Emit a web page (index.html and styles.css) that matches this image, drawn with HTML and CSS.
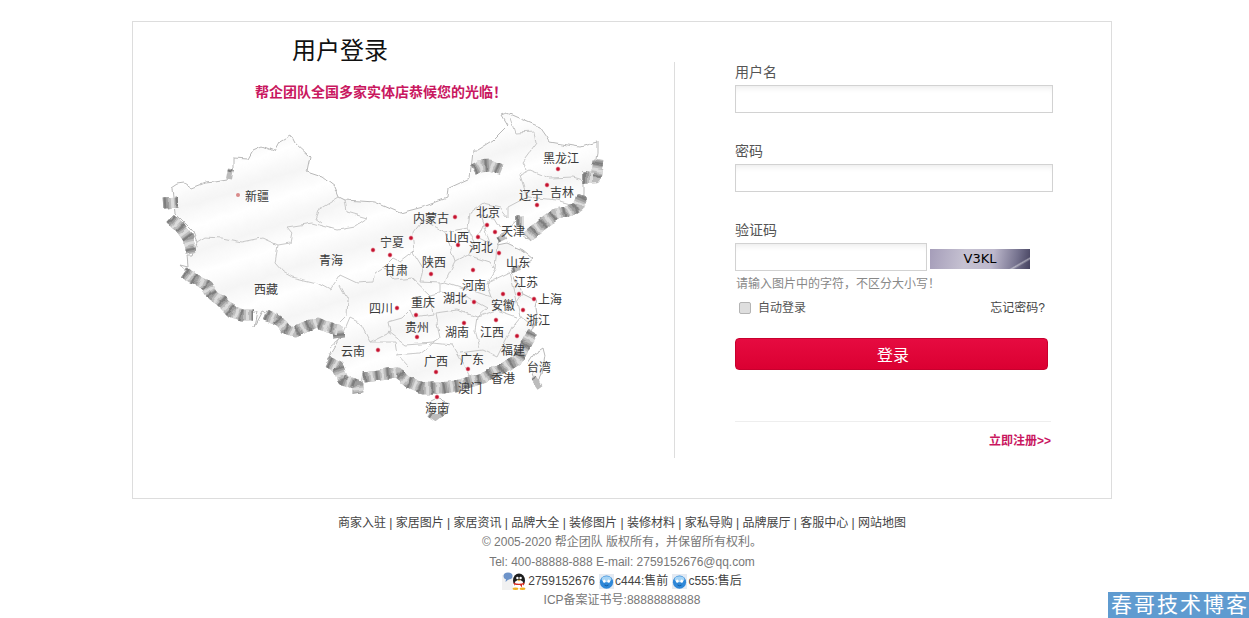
FILE: index.html
```html
<!DOCTYPE html>
<html lang="zh-CN">
<head>
    <meta charset="UTF-8">
    <title>用户登录</title>
    <link rel="stylesheet" href="styles.css">
</head>
<body>

    <div class="wrapper">
        <div class="card">
            <div class="left-col">
                <h1 class="title">用户登录</h1>
                <p class="tagline">帮企团队全国多家实体店恭候您的光临！</p>

                <svg class="map" width="460" height="325" viewBox="150 105 460 325">
                    <defs>
                        <linearGradient id="landGrad" x1="0" y1="0" x2="0" y2="1">
                            <stop offset="0" stop-color="#fff"/>
                            <stop offset="0.5" stop-color="#f5f5f5"/>
                            <stop offset="1" stop-color="#fff"/>
                        </linearGradient>
                        <pattern id="land" width="40" height="46" patternUnits="userSpaceOnUse" patternTransform="rotate(-18)">
                            <rect width="40" height="46" fill="url(#landGrad)"/>
                        </pattern>
                        <filter id="rough" x="140" y="100" width="480" height="335" filterUnits="userSpaceOnUse">
                            <feTurbulence type="fractalNoise" baseFrequency="0.09" numOctaves="2" seed="4"/>
                            <feDisplacementMap in="SourceGraphic" scale="5" xChannelSelector="R" yChannelSelector="G"/>
                        </filter>
                        <g id="ribbons">
                            <path d="M163 203 178 202"/>
                            <path d="M170 218 180 227 188 238 191 253"/>
                            <path d="M183 272 192 278 207 285 213 295 222 302 232 312 242 315 253 315"/>
                            <path d="M265 315 277 320 285 328 295 332 305 327 317 323 327 327 338 330 339 338"/>
                            <path d="M327 362 338 367 343 380 357 385 358 393"/>
                            <path d="M363 377 380 375 398 373 408 382 423 388 437 388 443 388 460 385 483 378 503 368 517 360 527 343 533 332"/>
                            <path d="M473 170 480 166 490 165 502 170"/>
                            <path d="M583 178 595 178 598 160"/>
                            <path d="M582 196 578 206 566 212 556 214 543 224 527 237"/>
                            <path d="M515 221 524 221"/>
                        </g>
                        <g id="ribbonsThin">
                            <path d="M231 168 229 179"/>
                            <path d="M497 240 505 236"/>
                            <path d="M512 270 520 268"/>
                            <path d="M430 415 436 419 445 412"/>
                            <path d="M533 377 540 387"/>
                        </g>
                    </defs>

                    <g filter="url(#rough)">
                        <!-- 陆地 -->
                        <path class="land" fill="url(#land)" d="M172 188 178 184 185 183 192 188 205 183 215 182 227 180 233 168 233 158 248 159 253 150 262 146 274 151 279 142 291 135 295 143 310 157 307 172 322 177 335 187 339 197 345 200 375 202 400 213 423 207 447 198 448 188 470 178 473 150 477 150 493 140 508 125 502 115 507 113 523 120 540 127 547 137 550 142 580 147 598 142 598 153 595 172 593 183 583 183 583 193 582 207 568 213 557 220 543 227 527 240 520 228 515 222 508 228 500 240 497 245 507 243 522 250 533 259 518 270 512 272 516 282 523 293 537 300 535 308 537 320 533 327 523 348 505 367 470 378 440 387 437 391 408 378 398 368 363 372 360 392 340 375 327 363 330 355 340 338 338 328 317 320 293 332 280 320 263 312 255 327 258 312 232 313 212 297 193 280 180 265 188 267 187 255 193 255 197 242 192 230 175 213Z"/>
                        <path class="land" fill="url(#land)" d="M427 403 437 398 448 403 446 412 436 420 430 414Z"/>
                        <path class="land" fill="url(#land)" d="M528 363 534 354 543 348 545 356 542 373 538 388 533 376Z"/>

                        <!-- 省界 -->
                        <g class="border">
                            <path d="M197 242 205 237 222 238 242 242 262 238 278 245 290 243 292 233 287 227 312 223 338 230 355 227 368 218 347 212 345 200"/>
                            <path d="M339 197 318 210 315 218 322 223"/>
                            <path d="M278 245 275 263 283 272 292 277 317 283 330 290 340 275 357 283 373 282 375 272 383 267 392 258 400 262 413 252 415 250 413 233 423 220 445 232 468 228 470 213 483 203 500 207 508 217 508 207 527 197 557 200 582 207"/>
                            <path d="M340 285 348 300 347 315 340 322 M350 318 360 323 370 342 390 332 388 322 402 318 410 310 413 318 433 315 430 295 440 293 440 283 445 282 455 262 445 232"/>
                            <path d="M383 267 395 280 412 278 430 295"/>
                            <path d="M413 252 423 268 420 282 440 283"/>
                            <path d="M330 347 342 337 350 318"/>
                            <path d="M370 342 395 342 397 355 408 367 M395 355 420 353 433 343 452 345 460 358 470 378"/>
                            <path d="M460 353 483 350 497 357 512 327 520 317 M480 348 475 330 477 317 497 310 517 317"/>
                            <path d="M435 313 457 310 477 317 M435 313 440 338 433 343 M388 332 405 345 433 343"/>
                            <path d="M440 293 467 297 487 308 477 317 M445 282 470 290 492 297 487 283 495 270 490 262 468 255 455 262"/>
                            <path d="M492 297 498 310 M517 302 520 317 533 327 M487 283 510 272 517 302 523 293"/>
                            <path d="M468 228 475 242 468 255 M495 270 497 245 M483 225 478 237 490 243 480 216 494 218 500 228"/>
                            <path d="M520 175 530 170 550 178 573 177 583 180 M520 175 527 197 M527 170 523 162 537 143 535 132 515 133 510 118"/>
                        </g>

                        <!-- 立体边 -->
                        <use href="#ribbons" class="ribbon rib-base"/>
                        <use href="#ribbons" class="ribbon rib-mid"/>
                        <use href="#ribbons" class="ribbon rib-dark"/>
                        <use href="#ribbons" class="ribbon rib-light"/>
                        <use href="#ribbonsThin" class="ribbon-thin rib-base"/>
                        <use href="#ribbonsThin" class="ribbon-thin rib-dark"/>
                    </g>

                    <!-- 门店 -->
                    <circle class="dot-faint" cx="238" cy="195" r="2"/>
                    <g class="dot">
                        <circle cx="558" cy="169" r="2.2"/>
                        <circle cx="547" cy="185" r="2.2"/>
                        <circle cx="537" cy="205" r="2.2"/>
                        <circle cx="455" cy="217" r="2.2"/>
                        <circle cx="487" cy="225" r="2.2"/>
                        <circle cx="495" cy="232" r="2.2"/>
                        <circle cx="478" cy="237" r="2.2"/>
                        <circle cx="458" cy="245" r="2.2"/>
                        <circle cx="411" cy="238" r="2.2"/>
                        <circle cx="390" cy="255" r="2.2"/>
                        <circle cx="373" cy="250" r="2.2"/>
                        <circle cx="431" cy="274" r="2.2"/>
                        <circle cx="499" cy="253" r="2.2"/>
                        <circle cx="473" cy="270" r="2.2"/>
                        <circle cx="519" cy="294" r="2.2"/>
                        <circle cx="503" cy="294" r="2.2"/>
                        <circle cx="534" cy="299" r="2.2"/>
                        <circle cx="474" cy="302" r="2.2"/>
                        <circle cx="523" cy="310" r="2.2"/>
                        <circle cx="397" cy="308" r="2.2"/>
                        <circle cx="416" cy="315" r="2.2"/>
                        <circle cx="417" cy="337" r="2.2"/>
                        <circle cx="464" cy="323" r="2.2"/>
                        <circle cx="496" cy="320" r="2.2"/>
                        <circle cx="517" cy="336" r="2.2"/>
                        <circle cx="378" cy="350" r="2.2"/>
                        <circle cx="436" cy="372" r="2.2"/>
                        <circle cx="468" cy="369" r="2.2"/>
                        <circle cx="437" cy="397" r="2.2"/>
                    </g>

                    <g class="place">
                        <text x="257" y="201">新疆</text>
                        <text x="266" y="294">西藏</text>
                        <text x="331" y="265">青海</text>
                        <text x="431" y="223">内蒙古</text>
                        <text x="392" y="247">宁夏</text>
                        <text x="396" y="275">甘肃</text>
                        <text x="434" y="267">陕西</text>
                        <text x="457" y="242">山西</text>
                        <text x="488" y="217">北京</text>
                        <text x="513" y="236">天津</text>
                        <text x="481" y="252">河北</text>
                        <text x="518" y="267">山东</text>
                        <text x="474" y="290">河南</text>
                        <text x="561" y="163">黑龙江</text>
                        <text x="562" y="197">吉林</text>
                        <text x="531" y="200">辽宁</text>
                        <text x="526" y="287">江苏</text>
                        <text x="503" y="310">安徽</text>
                        <text x="550" y="304">上海</text>
                        <text x="455" y="303">湖北</text>
                        <text x="538" y="325">浙江</text>
                        <text x="381" y="313">四川</text>
                        <text x="423" y="307">重庆</text>
                        <text x="417" y="332">贵州</text>
                        <text x="457" y="337">湖南</text>
                        <text x="492" y="337">江西</text>
                        <text x="513" y="355">福建</text>
                        <text x="353" y="356">云南</text>
                        <text x="436" y="366">广西</text>
                        <text x="472" y="364">广东</text>
                        <text x="503" y="383">香港</text>
                        <text x="470" y="393">澳门</text>
                        <text x="539" y="372">台湾</text>
                        <text x="437" y="413">海南</text>
                    </g>
                </svg>
            </div>

            <form class="right-col">
                <label class="field-label" for="username">用户名</label>
                <input class="text-input" type="text" id="username">

                <label class="field-label" for="password">密码</label>
                <input class="text-input" type="password" id="password">

                <label class="field-label" for="captcha">验证码</label>
                <div class="captcha-row">
                    <input class="text-input captcha-input" type="text" id="captcha">
                    <span class="captcha-img">V3KL</span>
                </div>
                <p class="hint">请输入图片中的字符，不区分大小写！</p>

                <div class="remember-row">
                    <label class="remember"><input type="checkbox">自动登录</label>
                    <a class="forgot" href="#">忘记密码?</a>
                </div>

                <button type="button" class="submit-btn">登录</button>

                <div class="register-row">
                    <a class="register" href="#">立即注册&gt;&gt;</a>
                </div>
            </form>
        </div>

        <div class="footer">
            <p class="footer-links">商家入驻 | 家居图片 | 家居资讯 | 品牌大全 | 装修图片 | 装修材料 | 家私导购 | 品牌展厅 | 客服中心 | 网站地图</p>
            <p>© 2005-2020 帮企团队 版权所有，并保留所有权利。</p>
            <p>Tel: 400-88888-888 E-mail: 2759152676@qq.com</p>
            <p class="footer-links footer-qq">
                <svg class="icon-qq" width="24" height="18" viewBox="0 0 24 18">
                    <rect x="0" y="3" width="11" height="15" fill="#f1f1f1"/>
                    <ellipse cx="6" cy="4" rx="4.5" ry="3.5" fill="#6d93c9"/>
                    <path d="M4 7 3.5 10 7 7Z" fill="#6d93c9"/>
                    <ellipse cx="17" cy="8.5" rx="6" ry="7" fill="#1d1d1d"/>
                    <ellipse cx="17" cy="12.5" rx="4.5" ry="4.5" fill="#fff"/>
                    <path d="M11.5 10.5Q17 13 22.5 10.5L22 13 20 12.5 20 15.5 18 13Q14 13 12 12.5Z" fill="#d92a1c"/>
                    <circle cx="15.4" cy="6" r="1.2" fill="#fff"/>
                    <circle cx="18.6" cy="6" r="1.2" fill="#fff"/>
                    <path d="M15.5 7.8H18.5L17 9.5Z" fill="#f0b020"/>
                    <ellipse cx="13.5" cy="16.7" rx="3" ry="1.3" fill="#f0b020"/>
                    <ellipse cx="20.5" cy="16.7" rx="3" ry="1.3" fill="#f0b020"/>
                </svg>
                <span class="qq-num">2759152676</span>
                <svg class="icon-face" width="15" height="15" viewBox="0 0 15 15">
                    <rect width="15" height="15" fill="#e4eaf2"/>
                    <circle cx="7.5" cy="8.2" r="6.6" fill="#2f88d8"/>
                    <ellipse cx="7.5" cy="5.2" rx="4.8" ry="3" fill="#a6d4f5"/>
                    <ellipse cx="5.3" cy="7.2" rx="1.3" ry="1.6" fill="#fff"/>
                    <ellipse cx="9.7" cy="7.2" rx="1.3" ry="1.6" fill="#fff"/>
                    <path d="M5.5 11Q7.5 12.5 9.5 11" fill="none" stroke="#0e4f8f" stroke-width="0.8"/>
                </svg>
                <span class="qq-name">c444:售前</span>
                <svg class="icon-face" width="15" height="15" viewBox="0 0 15 15">
                    <rect width="15" height="15" fill="#e4eaf2"/>
                    <circle cx="7.5" cy="8.2" r="6.6" fill="#2f88d8"/>
                    <ellipse cx="7.5" cy="5.2" rx="4.8" ry="3" fill="#a6d4f5"/>
                    <ellipse cx="5.3" cy="7.2" rx="1.3" ry="1.6" fill="#fff"/>
                    <ellipse cx="9.7" cy="7.2" rx="1.3" ry="1.6" fill="#fff"/>
                    <path d="M5.5 11Q7.5 12.5 9.5 11" fill="none" stroke="#0e4f8f" stroke-width="0.8"/>
                </svg>
                <span class="qq-name">c555:售后</span>
            </p>
            <p>ICP备案证书号:88888888888</p>
        </div>
    </div>

    <div class="watermark">春哥技术博客</div>

</body>
</html>
```

FILE: styles.css
```css
* {
    box-sizing: border-box;
}

html, body {
    height: 618px;
    overflow: hidden;
}

body {
    margin: 0;
    background: #fff;
    font-family: "Liberation Sans", "Noto Sans CJK SC", sans-serif;
    font-size: 12px;
    color: #555;
    position: relative;
}

p {
    margin: 0;
}

a {
    text-decoration: none;
}

.wrapper {
    width: 980px;
    margin: 21px 0 0 132px;
}

.card {
    display: flex;
    height: 478px;
    border: 1px solid #ddd;
}

.left-col {
    width: 541px;
    flex: none;
}

.title {
    margin: 12px 0 0 159px;
    font-size: 24px;
    font-weight: normal;
    line-height: 34px;
    color: #111;
}

.tagline {
    margin: 14px 0 0 122px;
    font-size: 14px;
    font-weight: bold;
    line-height: 20px;
    color: #c9175f;
}

.map {
    display: block;
    margin: 3px 0 0 17px;
}

.land {
    stroke: #b8b8b8;
    stroke-width: 1;
    stroke-linejoin: round;
}

.border {
    fill: none;
    stroke: #c8c8c8;
    stroke-width: 1;
    stroke-linejoin: round;
}

.ribbon {
    fill: none;
    stroke-width: 11;
    stroke-linejoin: round;
}

.ribbon-thin {
    fill: none;
    stroke-width: 6;
    stroke-linejoin: round;
}

.rib-base {
    stroke: #bcbcbc;
}

.rib-mid {
    stroke: #9c9c9c;
    stroke-dasharray: 5 7;
}

.rib-dark {
    stroke: #7e7e7e;
    stroke-dasharray: 2 10;
    stroke-dashoffset: -1;
}

.rib-light {
    stroke: #dcdcdc;
    stroke-dasharray: 3 9;
    stroke-dashoffset: -7;
}

.dot {
    fill: #c4122f;
    stroke: #f8d8dc;
    stroke-width: 0.6;
}

.dot-faint {
    fill: #d98a8a;
}

.place {
    font-size: 12px;
    fill: #3a3a3a;
    text-anchor: middle;
}

.right-col {
    width: 437px;
    height: 396px;
    margin-top: 40px;
    padding-left: 60px;
    border-left: 1px solid #ddd;
}

.field-label {
    display: block;
    font-size: 14px;
    line-height: 20px;
    color: #555;
}

.text-input {
    display: block;
    width: 318px;
    height: 28px;
    margin: 3px 0 28px;
    padding: 0 6px;
    border: 1px solid #d2d2d2;
    box-shadow: inset 0 6px 7px -5px #e6e6e6;
    background: #fff;
}

.captcha-row {
    display: flex;
    align-items: flex-end;
    gap: 3px;
    margin-top: 3px;
}

.captcha-input {
    width: 192px;
    margin: 0;
}

.captcha-img {
    width: 100px;
    height: 20px;
    margin-bottom: 2px;
    background: linear-gradient(150deg, transparent 84%, rgba(255, 255, 255, 0.45) 86%, transparent 89%),
        linear-gradient(100deg, #a59db9 0%, #c6c2d2 35%, #bdb8cc 62%, #777490 85%, #45425f 100%);
    font-family: "DejaVu Sans", sans-serif;
    font-size: 13px;
    line-height: 20px;
    text-align: center;
    color: #000;
}

.hint {
    margin-top: 5px;
    padding-left: 1px;
    line-height: 16px;
    color: #888;
}

.remember-row {
    display: flex;
    justify-content: space-between;
    width: 310px;
    margin-top: 8px;
    line-height: 16px;
}

.remember {
    display: flex;
    align-items: center;
    color: #555;
}

.remember input {
    appearance: none;
    width: 12px;
    height: 12px;
    margin: 0 7px 0 4px;
    border: 1px solid #b4b4b4;
    border-radius: 2px;
    background: #dedede;
}

.forgot {
    color: #444;
}

.submit-btn {
    display: block;
    width: 313px;
    height: 32px;
    margin-top: 22px;
    padding: 0 0 0 3px;
    border: 1px solid #c8002e;
    border-radius: 4px;
    background: linear-gradient(#e60b40, #db0032);
    font-family: inherit;
    font-size: 16px;
    color: #fff;
    cursor: pointer;
}

.register-row {
    width: 316px;
    margin-top: 51px;
    padding-top: 11px;
    border-top: 1px solid #eee;
    line-height: 16px;
    text-align: right;
}

.register {
    font-weight: bold;
    color: #c9175f;
}

.footer {
    margin-top: 15px;
    line-height: 19.25px;
    text-align: center;
    color: #777;
}

.footer-links {
    color: #444;
}

.footer-qq {
    display: flex;
    justify-content: center;
    align-items: center;
    height: 19.25px;
}

.icon-qq {
    margin-right: 2px;
}

.icon-face {
    margin: 0 1px 0 4px;
}

.watermark {
    position: absolute;
    right: 0;
    bottom: 0;
    width: 141px;
    height: 26px;
    background: #5f9bd0;
    font-size: 21px;
    line-height: 26px;
    letter-spacing: 2px;
    text-align: right;
    white-space: nowrap;
    color: #fff;
}
```
